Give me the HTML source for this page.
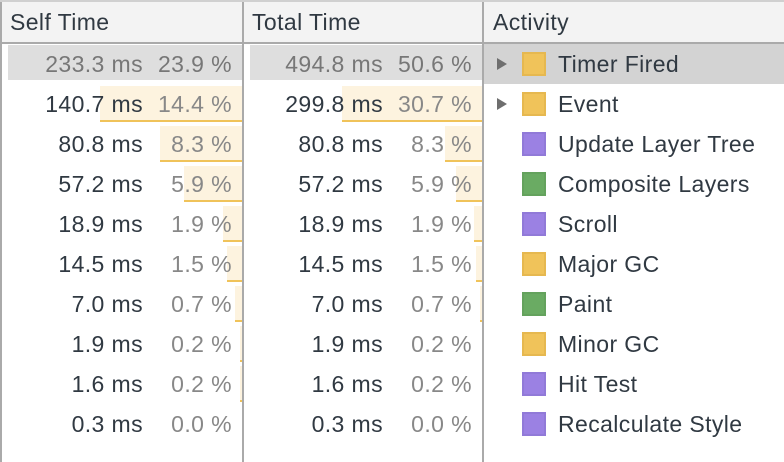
<!DOCTYPE html>
<html><head><meta charset="utf-8"><style>
*{margin:0;padding:0;box-sizing:border-box}
body{width:784px;height:462px;overflow:hidden;background:#fff;font-family:"Liberation Sans",Arial,sans-serif;font-size:23px;letter-spacing:0.4px;color:#303942;position:relative}
.top{position:absolute;left:0;top:0;width:784px;height:2px;background:#d0d0d0}
.hdr{position:absolute;left:0;top:2px;width:784px;height:40px;background:#f3f3f3}
.hb{position:absolute;left:0;top:42px;width:784px;height:2px;background:#aaa}
.h{position:absolute;top:2px;height:40px;line-height:40px}
.v{position:absolute;top:2px;width:2px;height:460px;background:#aaa}
.row{position:absolute;left:0;width:784px;height:40px}
.selbox{position:absolute;top:1px;height:35px;background:#dedede}
.bar{position:absolute;top:2px;height:36px;background:#fdf3df;border-bottom:2px solid #f0c35a}
.t{position:absolute;top:0;height:40px;line-height:40px;white-space:nowrap}
.p{color:#888}
.sq{position:absolute;left:522px;top:8px;width:24px;height:24px}
.y{background:#f0c35a;border:2px solid #e6b850}
.pu{background:#9b81e3;border:2px solid #917ad8}
.g{background:#6aab63;border:2px solid #64a25d}
.tri{position:absolute;left:497px;top:14px;width:0;height:0;border-top:6px solid transparent;border-bottom:6px solid transparent;border-left:10px solid #6e6e6e}
.a{left:558px}
</style></head><body>
<div class="top"></div>
<div class="hdr"></div>
<div class="hb"></div>
<div class="h" style="left:10px">Self Time</div>
<div class="h" style="left:252px">Total Time</div>
<div class="h" style="left:493px">Activity</div>

<div class="row" style="top:44px">
<div class="selbox" style="left:8px;width:234px"></div>
<div class="selbox" style="left:250px;width:232px"></div>
<div style="position:absolute;left:484px;top:0;width:300px;height:40px;background:#d3d3d3"></div>
<div class="t" style="right:641px;color:#777">233.3 ms</div><div class="t" style="right:552px;color:#777">23.9 %</div>
<div class="t" style="right:401px;color:#777">494.8 ms</div><div class="t" style="right:312px;color:#777">50.6 %</div>
<div class="tri"></div><div class="sq y"></div><div class="t a">Timer Fired</div>
</div>

<div class="row" style="top:84px">
<div class="bar" style="left:100px;width:142px"></div><div class="bar" style="left:342px;width:141px"></div>
<div class="t" style="right:641px">140.7 ms</div><div class="t p" style="right:552px">14.4 %</div>
<div class="t" style="right:401px">299.8 ms</div><div class="t p" style="right:312px">30.7 %</div>
<div class="tri"></div><div class="sq y"></div><div class="t a">Event</div>
</div>

<div class="row" style="top:124px">
<div class="bar" style="left:160px;width:82px"></div><div class="bar" style="left:445px;width:38px"></div>
<div class="t" style="right:641px">80.8 ms</div><div class="t p" style="right:552px">8.3 %</div>
<div class="t" style="right:401px">80.8 ms</div><div class="t p" style="right:312px">8.3 %</div>
<div class="sq pu"></div><div class="t a">Update Layer Tree</div>
</div>

<div class="row" style="top:164px">
<div class="bar" style="left:184px;width:58px"></div><div class="bar" style="left:456px;width:27px"></div>
<div class="t" style="right:641px">57.2 ms</div><div class="t p" style="right:552px">5.9 %</div>
<div class="t" style="right:401px">57.2 ms</div><div class="t p" style="right:312px">5.9 %</div>
<div class="sq g"></div><div class="t a">Composite Layers</div>
</div>

<div class="row" style="top:204px">
<div class="bar" style="left:223px;width:19px"></div><div class="bar" style="left:474px;width:9px"></div>
<div class="t" style="right:641px">18.9 ms</div><div class="t p" style="right:552px">1.9 %</div>
<div class="t" style="right:401px">18.9 ms</div><div class="t p" style="right:312px">1.9 %</div>
<div class="sq pu"></div><div class="t a">Scroll</div>
</div>

<div class="row" style="top:244px">
<div class="bar" style="left:227px;width:15px"></div><div class="bar" style="left:476px;width:7px"></div>
<div class="t" style="right:641px">14.5 ms</div><div class="t p" style="right:552px">1.5 %</div>
<div class="t" style="right:401px">14.5 ms</div><div class="t p" style="right:312px">1.5 %</div>
<div class="sq y"></div><div class="t a">Major GC</div>
</div>

<div class="row" style="top:284px">
<div class="bar" style="left:235px;width:7px"></div><div class="bar" style="left:480px;width:3px"></div>
<div class="t" style="right:641px">7.0 ms</div><div class="t p" style="right:552px">0.7 %</div>
<div class="t" style="right:401px">7.0 ms</div><div class="t p" style="right:312px">0.7 %</div>
<div class="sq g"></div><div class="t a">Paint</div>
</div>

<div class="row" style="top:324px">
<div class="bar" style="left:240px;width:2px"></div>
<div class="t" style="right:641px">1.9 ms</div><div class="t p" style="right:552px">0.2 %</div>
<div class="t" style="right:401px">1.9 ms</div><div class="t p" style="right:312px">0.2 %</div>
<div class="sq y"></div><div class="t a">Minor GC</div>
</div>

<div class="row" style="top:364px">
<div class="bar" style="left:240px;width:2px"></div>
<div class="t" style="right:641px">1.6 ms</div><div class="t p" style="right:552px">0.2 %</div>
<div class="t" style="right:401px">1.6 ms</div><div class="t p" style="right:312px">0.2 %</div>
<div class="sq pu"></div><div class="t a">Hit Test</div>
</div>

<div class="row" style="top:404px">
<div class="t" style="right:641px">0.3 ms</div><div class="t p" style="right:552px">0.0 %</div>
<div class="t" style="right:401px">0.3 ms</div><div class="t p" style="right:312px">0.0 %</div>
<div class="sq pu"></div><div class="t a">Recalculate Style</div>
</div>

<div class="v" style="left:0"></div>
<div class="v" style="left:242px"></div>
<div class="v" style="left:482px"></div>
</body></html>
